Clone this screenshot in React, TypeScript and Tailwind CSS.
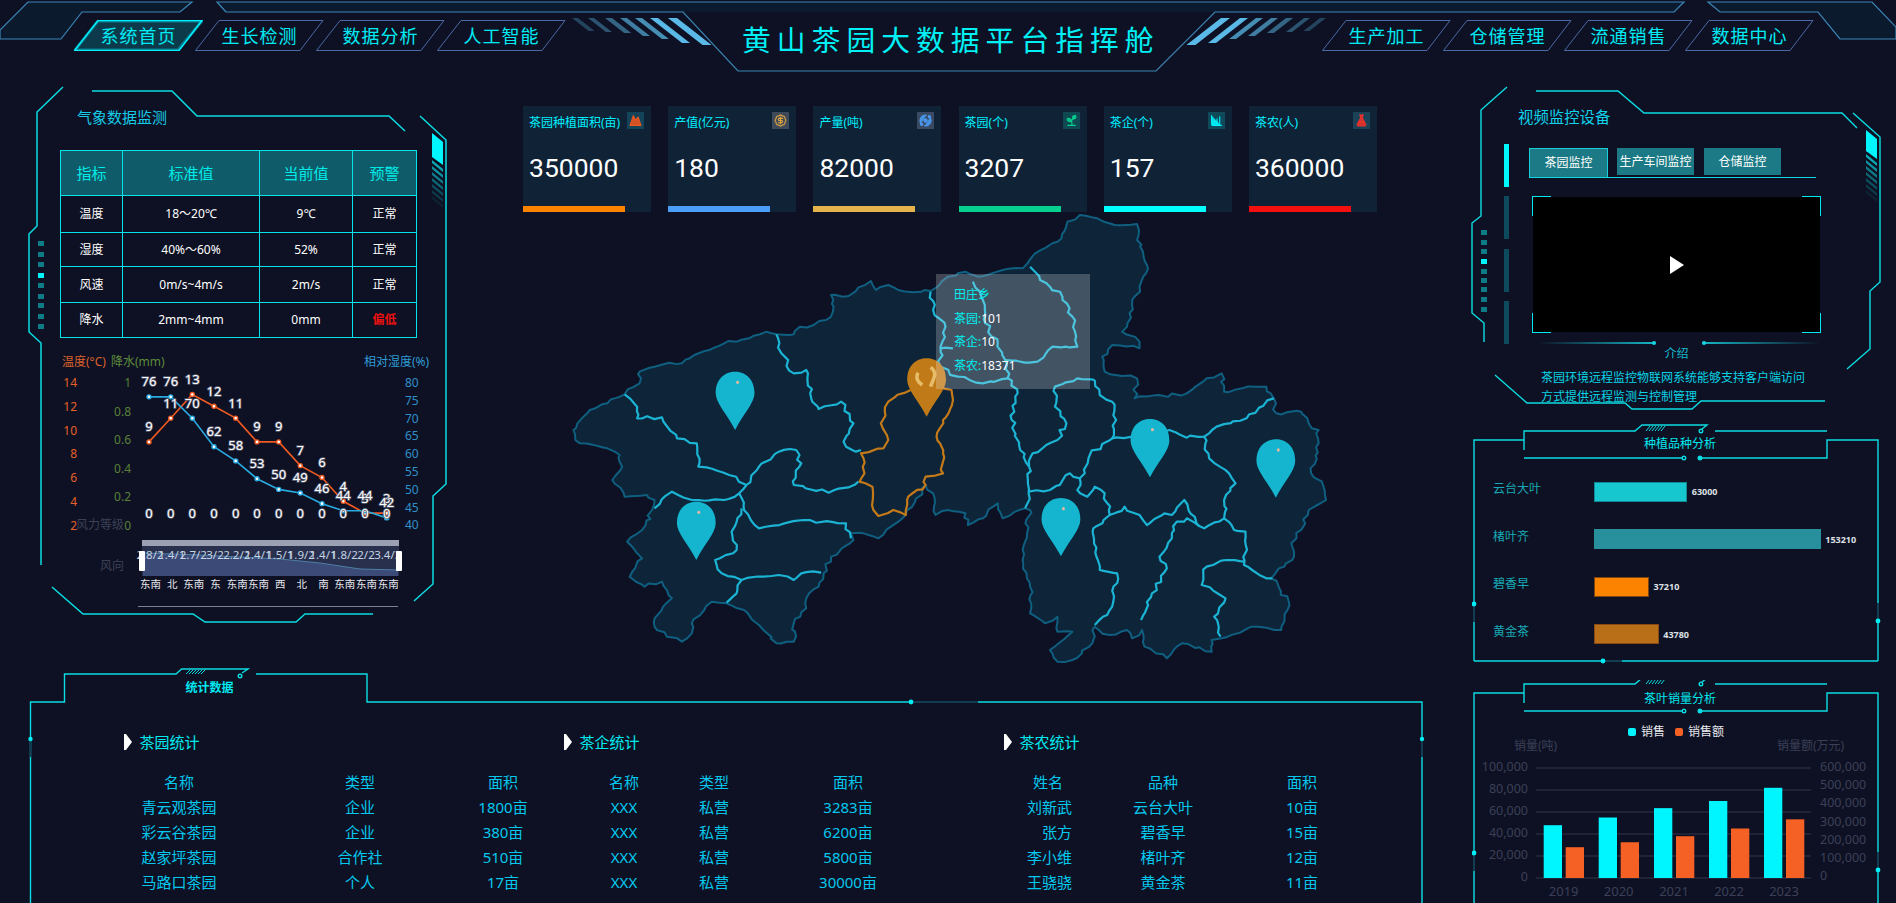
import React from "react";
import { Mountain, BadgeDollarSign, Orbit, Sprout, ChartColumnIncreasing, FlaskConical } from "lucide-react";

const CY = "#0bdde4";

function Tab({ label, active }: { label: string; active?: boolean }) {
  return (
    <div className="relative w-[129px] h-[31px] flex items-center justify-center -mr-[8px] shrink-0">
      <svg className="absolute inset-0" width="129" height="31" viewBox="0 0 129 31">
        {active && <polygon points="24,1 128,1 104,30 1,30" fill="#0d3a4a" stroke="#00f0ff" strokeWidth="3" strokeOpacity="0.35" />}
        <polygon points="24,0.5 128,0.5 105,30.5 0.5,30.5" fill="none" stroke={active ? "#00f0ff" : "#4a6aa5"} strokeWidth={active ? 1.5 : 1} />
      </svg>
      <span className="relative text-[18px] tracking-[1px] leading-none text-[#00ecf5]">{label}</span>
    </div>
  );
}

const stripes = [
  [668, 9, 27, 1], [650, 8, 25, 1], [635, 7, 21, 0.75], [620, 7, 18, 0.65], [605, 7, 15, 0.5], [588, 6, 14, 0.4], [572, 6, 13, 0.3],
];

function HeaderDecor() {
  const s = "#3a86b5";
  return (
    <svg className="absolute inset-0" width="1896" height="87" viewBox="0 0 1896 87">
      <polygon points="0,30 28,2 192,2 180,12 82,12 61,39 0,39" fill="#0c1a2e" stroke={s} strokeWidth="1.2" />
      <polygon points="217,2 1684,2 1674,12 226,12" fill="#0c1a30" />
      <polyline points="226,12 217,2 1684,2 1674,12 1215,12 1156,71 738,71 683,12 226,12" fill="none" stroke={s} strokeWidth="1.2" />
      <polygon points="1708,2 1872,2 1896,27 1896,39 1840,39 1818,12 1720,12" fill="#0c1a2e" stroke={s} strokeWidth="1.2" />
      {stripes.map(([x, w, h, o], i) => (
        <g key={i} fill="#5ab9e6" opacity={o}>
          <polygon points={`${x},18 ${x + w},18 ${x + w + h * 1.28},${18 + h} ${x + h * 1.28},${18 + h}`} />
          <polygon points={`${1898 - x},18 ${1898 - x - w},18 ${1898 - x - w - h * 1.28},${18 + h} ${1898 - x - h * 1.28},${18 + h}`} />
        </g>
      ))}
    </svg>
  );
}

function Header() {
  return (
    <header className="relative h-[87px] grid grid-cols-[742px_408px_1fr]">
      <HeaderDecor />
      <nav className="relative flex pl-[74px] pt-[20px] items-start">
        <Tab label="系统首页" active />
        <Tab label="生长检测" />
        <Tab label="数据分析" />
        <Tab label="人工智能" />
      </nav>
      <h1 className="relative pt-[22px] text-[28.8px] leading-[36px] tracking-[6px] font-normal text-[#00f0f5] whitespace-nowrap">黄山茶园大数据平台指挥舱</h1>
      <nav className="relative flex pl-[172px] pt-[20px] items-start">
        <Tab label="生产加工" />
        <Tab label="仓储管理" />
        <Tab label="流通销售" />
        <Tab label="数据中心" />
      </nav>
    </header>
  );
}

function Dots({ x, ys }: { x: number; ys: number[] }) {
  return (
    <g stroke="none">
      {ys.map((v, i) => (
        <rect key={i} x={x} y={v} width="6" height="5" fill={i === 3 ? "#00f6ff" : "#0e7c86"} />
      ))}
    </g>
  );
}

function Hatch({ x, y }: { x: number; y: number }) {
  return (
    <g stroke="none">
      {[0, 1, 2, 3, 4, 5, 6].map((i) => (
        <polygon key={i} fill="#0bdde4" opacity={0.75 - i * 0.11} points={`${x},${y + i * 6} ${x + 11},${y + 9 + i * 6} ${x + 11},${y + 12 + i * 6} ${x},${y + 3 + i * 6}`} />
      ))}
    </g>
  );
}

const tempV = [9, 11, 13, 12, 11, 9, 9, 7, 6, 4, 3, 3];
const humV = [76, 76, 70, 62, 58, 53, 50, 49, 46, 44, 44, 42];
const xs = [149, 170.7, 192.3, 214, 235.7, 257, 278.7, 300.3, 322, 343.3, 365, 386.7];
const dates = ["2.8/2", "1.4/1", "2.7/2", "3/2", "2.2/2", "1.4/1", "1.5/1", "1.9/2", "1.4/1", "1.8/2", "2/2", "3.4/3"];
const winds = ["东南", "北", "东南", "东", "东南", "东南", "西", "北", "南", "东南", "东南", "东南"];
const ty = (v: number) => 525 - (v - 2) * 11.87;
const hy = (v: number) => 525 - (v - 40) * 3.56;

function WeatherChart() {
  const label = (x: number, y: number, t: string | number, k: string) => (
    <text key={k} x={x} y={y} textAnchor="middle" fontSize="13" fill="#fff" stroke="#5a5e72" strokeWidth="1.6" paintOrder="stroke">{t}</text>
  );
  return (
    <svg className="ml-[11px] mt-[7px] overflow-visible" width="400" height="270" viewBox="40 345 400 270">
      <text x="62" y="366" fontSize="12" fill="#d9602c">温度(°C)</text>
      <text x="111" y="366" fontSize="12" fill="#5d8a3c">降水(mm)</text>
      <text x="364" y="366" fontSize="12" fill="#2f9bd6">相对湿度(%)</text>
      {[14, 12, 10, 8, 6, 4, 2].map((v, i) => (
        <text key={v} x="77" y={387 + i * 23.75} textAnchor="end" fontSize="12" fill="#e5602a">{v}</text>
      ))}
      {["1", "0.8", "0.6", "0.4", "0.2", "0"].map((v, i) => (
        <text key={v} x="131" y={387 + i * 28.5} textAnchor="end" fontSize="12" fill="#5a8038">{v}</text>
      ))}
      <text x="76" y="529" fontSize="12" fill="#3d4158">风力等级</text>
      {[80, 75, 70, 65, 60, 55, 50, 45, 40].map((v, i) => (
        <text key={v} x="405" y={387 + i * 17.8} fontSize="12" fill="#2f8fc8">{v}</text>
      ))}
      <polyline points={xs.map((x, i) => `${x},${ty(tempV[i])}`).join(" ")} fill="none" stroke="#f05a22" strokeWidth="1.6" />
      <polyline points={xs.map((x, i) => `${x},${hy(humV[i])}`).join(" ")} fill="none" stroke="#29abe2" strokeWidth="1.6" />
      {xs.map((x, i) => <circle key={"t" + i} cx={x} cy={ty(tempV[i])} r="2" fill="#fff" stroke="#f05a22" strokeWidth="1.4" />)}
      {xs.map((x, i) => <circle key={"h" + i} cx={x} cy={hy(humV[i])} r="2" fill="#fff" stroke="#29abe2" strokeWidth="1.4" />)}
      {xs.map((x, i) => label(x, 518, 0, "z" + i))}
      {xs.map((x, i) => label(x, ty(tempV[i]) - 10.5, tempV[i], "tl" + i))}
      {xs.map((x, i) => label(x, hy(humV[i]) - 10.5, humV[i], "hl" + i))}
      <rect x="142" y="540" width="257" height="36" fill="#29304e" />
      <rect x="142" y="540" width="257" height="6" fill="#9ba0b2" />
      <path d="M143,553 L200,555 L280,559 L320,563 L360,569 L398,570 L398,576 L143,576 Z" fill="#3c4a78" />
      <path d="M143,553 L200,555 L280,559 L320,563 L360,569 L398,570" fill="none" stroke="#4e7fa5" />
      {xs.map((x, i) => (
        <text key={"d" + i} x={x + 1} y="559" textAnchor="middle" fontSize="11.5" fill="#c3d4e2">{dates[i]}</text>
      ))}
      <rect x="139" y="551" width="6" height="20" rx="1" fill="#fff" />
      <rect x="396" y="551" width="6" height="20" rx="1" fill="#fff" />
      <text x="100" y="570" fontSize="12" fill="#3d4158">风向</text>
      {xs.map((x, i) => (
        <text key={"w" + i} x={x + 1.5} y="588" textAnchor="middle" fontSize="10.5" fill="#e8e8ee">{winds[i]}</text>
      ))}
      <line x1="138" y1="606.5" x2="398" y2="606.5" stroke="#7d8090" />
    </svg>
  );
}

const weather = [
  ["温度", "18～20℃", "9℃", "正常", "h-[37px]"],
  ["湿度", "40%～60%", "52%", "正常", "h-[34px]"],
  ["风速", "0m/s~4m/s", "2m/s", "正常", "h-[36px]"],
  ["降水", "2mm~4mm", "0mm", "偏低", "h-[35px]"],
];

function WeatherPanel() {
  const td = "border border-[#06e4ea] text-center text-[12px] text-white p-0";
  const th = "border border-[#06e4ea] text-center text-[15px] font-normal text-[#00ece8] p-0";
  return (
    <section className="relative w-[420px] h-[581px] shrink-0">
      <svg className="absolute inset-0 overflow-visible" width="420" height="540" viewBox="29 87 420 540" fill="none" stroke={CY} strokeWidth="1.5">
        <polyline points="63,87 37,112 37,226 29,234 29,332 41,343 41,565" />
        <polyline points="92,91 172,91 197,116 389,116 405,131" />
        <polyline points="420,116 446,140 446,484 433,496 433,584 414,601" />
        <polyline points="52,587 83,614 193,614 205,622 296,622 305,614 373,614" />
        <polygon points="432,133 443,142 443,165 432,157" fill="#00f6ff" stroke="none" />
        <Hatch x={432} y={160} />
        <Dots x={38} ys={[241, 252, 262, 273, 283, 294, 303, 314, 324]} />
      </svg>
      <div className="relative">
        <h2 className="pt-[20px] pl-[48px] text-[15px] leading-[20px] font-normal text-[#16cbe8]">气象数据监测</h2>
        <table className="ml-[31px] mt-[23px] w-[357px] border-collapse table-fixed">
          <colgroup>
            <col className="w-[62px]" />
            <col className="w-[137px]" />
            <col className="w-[93px]" />
            <col className="w-[64px]" />
          </colgroup>
          <thead>
            <tr className="h-[45px] bg-[#0f5b69]">
              <th className={th}>指标</th>
              <th className={th}>标准值</th>
              <th className={th}>当前值</th>
              <th className={th}>预警</th>
            </tr>
          </thead>
          <tbody>
            {weather.map((r) => (
              <tr key={r[0]} className={r[4]}>
                <td className={td}>{r[0]}</td>
                <td className={td}>{r[1]}</td>
                <td className={td}>{r[2]}</td>
                {r[3] === "偏低" ? (
                  <td className="border border-[#06e4ea] text-center text-[12px] font-bold text-[#f01010] p-0">{r[3]}</td>
                ) : (
                  <td className={td}>{r[3]}</td>
                )}
              </tr>
            ))}
          </tbody>
        </table>
        <WeatherChart />
      </div>
    </section>
  );
}

const kpis = [
  { t: "茶园种植面积(亩)", v: "350000", bar: "bg-[#fc8300]", ib: "bg-[#14445a]", ic: "#f0561e", f: "#f0561e", I: Mountain },
  { t: "产值(亿元)", v: "180", bar: "bg-[#4a9ef8]", ib: "bg-[#3e4a5a]", ic: "#e3a63c", f: "none", I: BadgeDollarSign },
  { t: "产量(吨)", v: "82000", bar: "bg-[#e3b44c]", ib: "bg-[#3a4a62]", ic: "#4a9ef8", f: "#4a9ef8", I: Orbit },
  { t: "茶园(个)", v: "3207", bar: "bg-[#05d08e]", ib: "bg-[#0f4a52]", ic: "#05d08e", f: "#05d08e", I: Sprout },
  { t: "茶企(个)", v: "157", bar: "bg-[#0ff]", ib: "bg-[#0f4a5a]", ic: "#00f6ff", f: "#00f6ff", I: ChartColumnIncreasing },
  { t: "茶农(人)", v: "360000", bar: "bg-[#f50f0f]", ib: "bg-[#1c4258]", ic: "#f0302a", f: "#f0302a", I: FlaskConical },
];

function rough(pts: number[][], amp: number, seed: number, closed = false) {
  const p = closed ? [...pts, pts[0]] : pts;
  let out = `M${p[0][0]},${p[0][1]}`;
  let c = seed;
  const n = () => {
    c += 1;
    const s = Math.sin(c * 12.9898 + seed * 78.233) * 43758.5453;
    return (s - Math.floor(s) - 0.5) * 2 * amp;
  };
  for (let i = 1; i < p.length; i++) {
    const [a, b] = p[i - 1];
    const [x, y] = p[i];
    const len = Math.hypot(x - a, y - b);
    const k = Math.max(1, Math.round(len / 14));
    for (let j = 1; j < k; j++) {
      out += ` L${(a + ((x - a) * j) / k + n()).toFixed(1)},${(b + ((y - b) * j) / k + n()).toFixed(1)}`;
    }
    out += ` L${x},${y}`;
  }
  return closed ? out + " Z" : out;
}

const outer = [[27,660],[35,640],[60,600],[95,580],[130,553],[160,520],[160,485],[190,470],[220,458],[245,460],[270,435],[300,420],[330,400],[355,395],[380,385],[415,365],[435,373],[470,373],[482,350],[510,345],[535,330],[550,290],[545,255],[580,258],[600,232],[625,213],[635,240],[660,225],[680,240],[710,247],[745,243],[780,200],[815,185],[840,200],[890,180],[930,175],[955,130],[1000,95],[1020,35],[1045,15],[1080,25],[1115,45],[1160,42],[1160,90],[1172,125],[1180,165],[1178,190],[1165,230],[1150,285],[1140,350],[1130,365],[1165,395],[1165,415],[1110,405],[1090,440],[1095,485],[1160,505],[1155,565],[1260,550],[1300,505],[1330,490],[1335,545],[1400,530],[1420,530],[1435,565],[1440,610],[1490,605],[1505,640],[1525,660],[1525,700],[1510,790],[1535,830],[1540,870],[1505,900],[1490,960],[1470,1000],[1472,1050],[1445,1075],[1430,1105],[1465,1175],[1450,1260],[1390,1250],[1330,1285],[1310,1290],[1310,1325],[1250,1300],[1220,1345],[1175,1310],[1170,1260],[1150,1285],[1140,1260],[1105,1275],[1075,1250],[1070,1300],[1030,1350],[1000,1355],[985,1320],[1030,1265],[1000,1265],[1000,1220],[975,1240],[945,1210],[945,1130],[930,1050],[930,1020],[945,900],[935,895],[890,925],[880,880],[850,925],[820,945],[815,910],[780,900],[755,915],[750,850],[735,825],[695,915],[640,985],[610,970],[585,970],[590,990],[545,1040],[530,1090],[520,1130],[495,1165],[495,1195],[470,1240],[470,1295],[435,1300],[400,1245],[370,1200],[335,1180],[305,1175],[290,1200],[265,1240],[265,1270],[245,1295],[215,1280],[190,1250],[190,1225],[225,1165],[205,1115],[170,1130],[140,1100],[165,1045],[135,995],[165,960],[185,900],[190,870],[175,855],[130,860],[105,810],[125,770],[120,735],[95,715],[40,700]];

const inner = [
  [[130,553],[155,590],[155,625],[205,622],[235,685],[275,700],[278,770],[340,795],[375,825]],
  [[435,373],[445,430],[470,490],[495,480],[505,565],[520,597],[565,575],[590,640],[570,695],[595,725],[605,720]],
  [[375,825],[400,770],[440,725],[475,720],[485,760],[470,825],[540,848],[600,815]],
  [[190,895],[225,845],[265,870],[330,870],[360,850],[375,825]],
  [[360,850],[370,900],[400,955],[490,930],[575,940],[585,985]],
  [[365,895],[345,965],[355,1020],[312,1050],[325,1090],[365,1110],[440,1095],[470,1110],[485,1090],[525,1088]],
  [[365,1110],[355,1150],[335,1178]],
  [[745,245],[750,300],[775,350],[765,410],[765,470],[800,500],[850,520],[900,505],[920,550],[908,630],[925,720],[943,770],[942,850],[935,895]],
  [[830,215],[850,270],[855,340],[880,400],[895,450],[900,505]],
  [[945,170],[965,210],[1010,260],[1030,320],[1040,410],[990,410],[960,455],[895,450]],
  [[765,415],[790,415]],
  [[1075,510],[1040,505],[995,530],[995,590],[1018,640],[1000,690],[950,730],[943,770]],
  [[1075,510],[1085,555],[1110,575],[1118,630],[1110,685],[1065,735],[1055,790],[1045,805],[1025,790],[985,840],[942,845]],
  [[1110,685],[1150,680],[1225,660],[1260,683],[1295,680],[1320,650],[1380,625],[1435,565]],
  [[1295,680],[1305,745],[1345,790],[1358,820],[1335,870],[1335,925],[1295,955],[1260,925],[1240,935],[1230,985],[1205,1040],[1220,1075],[1190,1150],[1168,1230]],
  [[1045,805],[1040,840],[1060,860],[1075,830],[1095,850],[1105,915],[1135,890],[1165,915],[1180,945],[1215,910],[1230,915],[1255,870],[1285,950]],
  [[1105,915],[1072,955],[1085,1080],[1120,1090],[1110,1190],[1075,1245]],
  [[1335,925],[1355,960],[1378,965],[1375,1065],[1420,1105],[1432,1105]],
  [[1375,1055],[1340,1050],[1300,1070],[1290,1125],[1338,1165],[1315,1220],[1328,1280]],
];

const orange = [[705,540],[660,575],[645,640],[660,690],[650,715],[605,730],[612,790],[602,815],[628,830],[630,900],[640,918],[670,900],[695,915],[700,860],[735,825],[735,800],[770,790],[770,730],[757,680],[770,630],[790,570],[787,540],[770,535]];

function pin(cx: number, t: number) {
  return `M${cx - 39},${t + 65} C${cx - 39},${t + 20} ${cx - 20},${t} ${cx},${t} C${cx + 20},${t} ${cx + 39},${t + 20} ${cx + 39},${t + 65} C${cx + 39},${t + 95} ${cx + 15},${t + 130} ${cx},${t + 175} C${cx - 15},${t + 130} ${cx - 39},${t + 95} ${cx - 39},${t + 65} Z`;
}

function MapView() {
  const pins = [[352, 485], [274, 875], [1007, 864], [1186, 627], [1439, 688]];
  return (
    <div className="relative w-[780px] h-[460px] ml-[111px] -mt-[2px]">
      <svg className="absolute inset-0" width="780" height="460" viewBox="0 0 1568 1380" preserveAspectRatio="none" fill="none">
        <path d={rough(outer, 5, 3, true)} fill="#0d2439" stroke="#0f5f80" strokeWidth="2" vectorEffect="non-scaling-stroke" strokeLinejoin="round" />
        {inner.map((l, i) => (
          <path key={i} d={rough(l, 5, i + 11)} stroke="#1bb4d4" strokeWidth="2.2" vectorEffect="non-scaling-stroke" strokeLinejoin="round" />
        ))}
        <path d={rough(orange, 5, 40)} stroke="#c47a18" strokeWidth="2.2" vectorEffect="non-scaling-stroke" strokeLinejoin="round" />
        {pins.map(([x, t], i) => (
          <g key={i}>
            <path d={pin(x, t)} fill="#15b5d0" />
            <ellipse cx={x + 5} cy={t + 32} rx="3" ry="5" fill="#e8b8a0" />
          </g>
        ))}
        <path d={pin(737, 445)} fill="#c07a18" />
        <path d="M720,488 C712,505 722,518 728,525 M745,472 C762,490 748,512 745,530" stroke="#e8bd6a" strokeWidth="3.5" vectorEffect="non-scaling-stroke" />
      </svg>
      <div className="absolute left-[376px] top-[64px] w-[154px] h-[115px] bg-[#ffffff38] pl-[18px] pt-[9px] text-[12px] leading-[23.7px] text-[#00f0f0]">
        <div>田庄乡</div>
        <div>茶园:<span className="text-white">101</span></div>
        <div>茶企:<span className="text-white">10</span></div>
        <div>茶农:<span className="text-white">18371</span></div>
      </div>
    </div>
  );
}

function Center() {
  return (
    <section className="w-[1023px] h-[581px] shrink-0">
      <div className="flex gap-[17.2px] pl-[74px] pt-[19px]">
        {kpis.map((k) => (
          <div key={k.t} className="relative w-[128px] h-[106px] bg-[#0f2236] shrink-0">
            <div className="flex justify-between pl-[6px] pr-[7px] pt-[6px] h-[24px]">
              <span className="text-[12px] leading-[20px] mt-[1px] text-[#00f0ff] whitespace-nowrap">{k.t}</span>
              <span className={`w-[17px] h-[17px] flex items-center justify-center shrink-0 ${k.ib}`}>
                <k.I size={13} color={k.ic} fill={k.f} fillOpacity={0.85} strokeWidth={2} />
              </span>
            </div>
            <div className="pl-[6px] pt-[20px] font-['Roboto','Noto_Sans',sans-serif] text-[26.5px] leading-[36px] text-white">{k.v}</div>
            <div className={`absolute left-0 bottom-0 w-[102px] h-[6px] ${k.bar}`} />
          </div>
        ))}
      </div>
      <MapView />
    </section>
  );
}

function Corner({ c }: { c: string }) {
  return <span className={`absolute w-[19px] h-[20px] border-[#00e8f0] ${c}`} />;
}

function VideoPanel() {
  return (
    <section className="relative h-[333px]">
      <svg className="absolute inset-0 overflow-visible" width="424" height="333" viewBox="1472 87 424 333" fill="none" stroke={CY} strokeWidth="1.4">
        <polyline points="1507,87 1481,110 1481,216 1472,223 1472,313 1484,323 1484,342" />
        <polyline points="1536,91 1618,91 1644,113 1842,113 1857,128" />
        <polyline points="1853,113 1880,137 1880,282 1870,291 1870,349 1847,369" />
        <polyline points="1495,375 1527,403 1625,403 1632,409 1692,409 1701,401 1825,401" />
        <polygon points="1866,130 1877,139 1877,159 1866,151" fill="#00f6ff" stroke="none" />
        <Hatch x={1866} y={154} />
        <Dots x={1481} ys={[230, 240, 249, 259, 269, 278, 287, 297, 307]} />
        <rect x="1504" y="144" width="5" height="43" fill="#00f6ff" stroke="none" />
        <rect x="1504" y="196" width="5" height="43" fill="#0d4a5e" stroke="none" />
        <rect x="1504" y="249" width="5" height="43" fill="#0d4a5e" stroke="none" />
        <rect x="1504" y="301" width="5" height="43" fill="#0d4a5e" stroke="none" />
      </svg>
      <div className="relative">
        <h2 className="pt-[21px] pl-[46px] text-[15.4px] leading-[20px] font-normal text-[#10d2ea]">视频监控设备</h2>
        <div className="ml-[57px] mt-[20px] w-[287px] h-[30px] flex items-start border-b border-[#0fd8e0] text-[12px] text-white">
          <div className="w-[79px] h-[29px] bg-[#1b7a85] border border-[#18cfd8] border-b-0 flex items-center justify-center">茶园监控</div>
          <div className="ml-[9px] w-[77px] h-[27px] bg-[#1b7a85] flex items-center justify-center">生产车间监控</div>
          <div className="ml-[10px] w-[77px] h-[27px] bg-[#1b7a85] flex items-center justify-center">仓储监控</div>
        </div>
        <div className="relative ml-[61px] mt-[19px] w-[287px] h-[135px] bg-black flex items-center justify-center">
          <Corner c="-left-px -top-px border-l border-t" />
          <Corner c="-right-px -top-px border-r border-t" />
          <Corner c="-left-px -bottom-px border-l border-b" />
          <Corner c="-right-px -bottom-px border-r border-b" />
          <svg width="14" height="18" viewBox="0 0 14 18"><polygon points="0,0 14,9 0,18" fill="#fff" /></svg>
        </div>
        <div className="ml-[65px] mt-[6px] w-[283px] h-[10px] flex justify-between items-center">
          <div className="relative w-[118px] h-[1.5px] bg-gradient-to-r from-transparent to-[#16b4c4]">
            <span className="absolute -right-[1px] -top-[1.5px] w-[4px] h-[4px] rounded-full bg-[#14d8e4]" />
          </div>
          <div className="relative w-[117px] h-[1.5px] bg-gradient-to-l from-transparent to-[#16b4c4]">
            <span className="absolute -left-[1px] -top-[1.5px] w-[4px] h-[4px] rounded-full bg-[#14d8e4]" />
          </div>
        </div>
        <div className="ml-[61px] w-[287px] text-center text-[12px] leading-[16px] -mt-[2px] text-[#16bcd0]">介绍</div>
        <p className="ml-[69px] mt-[7px] w-[270px] text-[12px] leading-[18.5px] text-[#08d4e6]">茶园环境远程监控物联网系统能够支持客户端访问<br />方式提供远程监测与控制管理</p>
      </div>
    </section>
  );
}

function Frame({ o, top, h, dots, bottom }: { o: number; top: number; h: number; dots: number[]; bottom: boolean }) {
  const [ld, rd] = dots;
  return (
    <svg className="absolute inset-0" width="424" height={h} viewBox={`1472 ${top} 424 ${h}`} fill="none" stroke={CY} strokeWidth="1.4">
      <polyline points={`1474,${bottom ? 661 : 930} 1474,${440 + o} 1524,${440 + o}`} />
      <polyline points={`1524,${450 + o} 1524,${431 + o} 1635,${431 + o} 1642,${425 + o} 1707,${425 + o} 1702,${429 + o}`} />
      <circle cx="1701" cy={431 + o} r="1.8" />
      {[0, 1, 2, 3, 4, 5].map((i) => (
        <line key={i} x1={1646 + i * 3} y1={431 + o} x2={1650 + i * 3} y2={426 + o} strokeWidth="1" />
      ))}
      <line x1="1715" y1={431 + o} x2="1827" y2={431 + o} />
      <polyline points={`1878,${bottom ? 661 : 930} 1878,${440 + o} 1827,${440 + o} 1827,${458 + o} 1701,${458 + o}`} />
      <line x1="1524" y1={458 + o} x2="1682" y2={458 + o} />
      <circle cx="1684" cy={458 + o} r="1.8" />
      <circle cx="1700" cy={458 + o} r="1.8" fill={CY} />
      {bottom && <line x1="1474" y1="661" x2="1878" y2="661" />}
      <line x1="1474" y1={ld} x2="1474" y2={ld + 18} stroke="#123d50" strokeWidth="2" />
      <circle cx="1474" cy={ld} r="2.4" fill="#00eef5" stroke="none" />
      <line x1="1878" y1={rd - 18} x2="1878" y2={rd} stroke="#123d50" strokeWidth="2" />
      <circle cx="1878" cy={rd} r="2.4" fill="#00eef5" stroke="none" />
      {bottom && <line x1="1603" y1="661" x2="1622" y2="661" stroke="#123d50" strokeWidth="2" />}
      {bottom && <circle cx="1603" cy="661" r="2.4" fill="#00eef5" stroke="none" />}
    </svg>
  );
}

const varieties = [
  { n: "云台大叶", v: 63000, c: "bg-[#17c7cf] border-[#0f8a96]" },
  { n: "楮叶齐", v: 153210, c: "bg-[#28909c] border-[#28909c]" },
  { n: "碧香早", v: 37210, c: "bg-[#fc8300] border-[#7a4510]" },
  { n: "黄金茶", v: 43780, c: "bg-[#b96e18] border-[#8a4a18]" },
];

function VarietyPanel() {
  return (
    <section className="relative h-[260px]">
      <Frame o={0} top={420} h={260} dots={[604, 621]} bottom />
      <div className="relative">
        <h3 className="pt-[15px] text-center pl-[8px] pr-[16px] text-[12px] leading-[18px] font-normal text-[#00e8f0]">种植品种分析</h3>
        <div className="mt-[15px] pl-[21px]">
          {varieties.map((r) => (
            <div key={r.n} className="flex items-center h-[47.5px]">
              <span className="w-[101px] mb-[5px] text-[12px] leading-[16px] text-[#17a9b5]">{r.n}</span>
              <span className={`h-[20px] border ${r.c}`} style={{ width: r.v * 0.00148 }} />
              <span className="ml-[4.5px] text-[9px] font-bold text-[#dde0e6]">{r.v}</span>
            </div>
          ))}
        </div>
      </div>
    </section>
  );
}

function SalesPanel() {
  const g = "#3b4058";
  const cy = [48000, 55000, 63500, 70000, 82000];
  const or = [168000, 195000, 228000, 270000, 320000];
  const bx = [1543.7, 1598.7, 1654, 1709, 1764];
  return (
    <section className="relative h-[223px]">
      <Frame o={253} top={680} h={223} dots={[853, 870]} bottom={false} />
      <div className="relative">
        <h3 className="pt-[10px] text-center pl-[8px] pr-[16px] text-[12px] leading-[18px] font-normal text-[#00e8f0]">茶叶销量分析</h3>
        <svg className="mt-[12px]" width="424" height="183" viewBox="1472 720 424 183">
          <rect x="1628" y="728" width="8" height="8" rx="2" fill="#00f6ff" />
          <text x="1641" y="735.5" fontSize="12" fill="#e8e8ee">销售</text>
          <rect x="1675" y="728" width="8" height="8" rx="2" fill="#f56024" />
          <text x="1688" y="735.5" fontSize="12" fill="#e8e8ee">销售额</text>
          <text x="1514" y="750" fontSize="12" fill={g}>销量(吨)</text>
          <text x="1777" y="750" fontSize="12" fill={g}>销量额(万元)</text>
          {[768, 790, 812, 834, 856, 878].map((y, i) => (
            <g key={y}>
              <line x1="1536" y1={y} x2="1811" y2={y} stroke="#33374a" />
              <text x="1528" y={y + 3} textAnchor="end" fontSize="12.5" fill={g}>{["100,000", "80,000", "60,000", "40,000", "20,000", "0"][i]}</text>
            </g>
          ))}
          {["600,000", "500,000", "400,000", "300,000", "200,000", "100,000", "0"].map((t, i) => (
            <text key={t} x="1820" y={771 + i * 18.2} fontSize="12.5" fill={g}>{t}</text>
          ))}
          {bx.map((x, i) => (
            <g key={x}>
              <rect x={x} y={878 - (cy[i] / 100000) * 110} width="18.3" height={(cy[i] / 100000) * 110} fill="#00f6ff" />
              <rect x={x + 22} y={878 - (or[i] / 600000) * 110} width="18.3" height={(or[i] / 600000) * 110} fill="#f56024" />
              <text x={x + 20} y="896" textAnchor="middle" fontSize="13" fill={g}>{2019 + i}</text>
            </g>
          ))}
        </svg>
      </div>
    </section>
  );
}

function SecHead({ t }: { t: string }) {
  return (
    <div className="flex items-center h-[20px] gap-[7.5px]">
      <svg width="8" height="16" viewBox="0 0 8 16"><polygon points="0,0 2,0 8,8 2,16 0,16" fill="#fff" /></svg>
      <span className="text-[15px] leading-[20px] text-[#00ecf0]">{t}</span>
    </div>
  );
}

function StatsPanel() {
  const cell = "text-center";
  const t1 = [["青云观茶园", "企业", "1800亩"], ["彩云谷茶园", "企业", "380亩"], ["赵家坪茶园", "合作社", "510亩"], ["马路口茶园", "个人", "17亩"]];
  const t2 = [["XXX", "私营", "3283亩"], ["XXX", "私营", "6200亩"], ["XXX", "私营", "5800亩"], ["XXX", "私营", "30000亩"]];
  const t3 = [["刘新武", "云台大叶", "10亩"], ["张方", "碧香早", "15亩"], ["李小维", "楮叶齐", "12亩"], ["王骁骁", "黄金茶", "11亩"]];
  return (
    <section className="relative h-[235px]">
      <svg className="absolute inset-0" width="1472" height="235" viewBox="0 668 1472 235" fill="none" stroke={CY} strokeWidth="1.4">
        <polyline points="30.5,903 30.5,702 64.5,702 64.5,674 176,674 181.6,669 248,669 242,673" />
        <circle cx="240" cy="676" r="1.8" />
        {[0, 1, 2, 3, 4, 5].map((i) => (
          <line key={i} x1={186 + i * 3} y1="674" x2={190 + i * 3} y2="670" strokeWidth="1" />
        ))}
        <polyline points="256,674 367,674 367,702 1422,702 1422,903" />
        <line x1="30.5" y1="739" x2="30.5" y2="757" stroke="#123d50" strokeWidth="2" />
        <line x1="1422" y1="739" x2="1422" y2="757" stroke="#123d50" strokeWidth="2" />
        <line x1="911" y1="702" x2="978" y2="702" stroke="#123d50" strokeWidth="2" />
        <circle cx="30.5" cy="739" r="2.2" fill="#00eef5" stroke="none" />
        <circle cx="1422" cy="739" r="2.2" fill="#00eef5" stroke="none" />
        <circle cx="911" cy="702" r="2.4" fill="#00eef5" stroke="none" />
      </svg>
      <div className="absolute left-[64px] top-[12px] w-[291px] text-center text-[12px] leading-[16px] font-bold text-[#00e8f0]">统计数据</div>
      <div className="relative flex pl-[108px] pt-[64px] text-[15px] leading-[25px] text-[#05c8ee]">
        <div className="w-[456px] shrink-0">
          <div className="pl-[16px]"><SecHead t="茶园统计" /></div>
          <div className="grid grid-cols-[142px_220px_66px] mt-[17.5px]">
            <div className={cell}>名称</div><div className={cell}>类型</div><div className={cell}>面积</div>
            {t1.flat().map((c, i) => <div key={i} className={cell}>{c}</div>)}
          </div>
        </div>
        <div className="w-[440px] shrink-0">
          <SecHead t="茶企统计" />
          <div className="grid grid-cols-[68px_112px_156px] mt-[17.5px] ml-[26px]">
            <div className={cell}>名称</div><div className={cell}>类型</div><div className={cell}>面积</div>
            {t2.flat().map((c, i) => <div key={i} className={cell}>{c}</div>)}
          </div>
        </div>
        <div className="w-[380px] shrink-0">
          <SecHead t="茶农统计" />
          <div className="grid grid-cols-[48px_182px_96px] mt-[17.5px] ml-[20px]">
            <div className={cell}>姓名</div><div className={cell}>品种</div><div className={cell}>面积</div>
            {t3.flat().map((c, i) => <div key={i} className={i % 3 === 0 ? "text-right whitespace-nowrap" : cell}>{c}</div>)}
          </div>
        </div>
      </div>
    </section>
  );
}

export default function App() {
  return (
    <div className="w-[1896px] h-[903px] overflow-hidden bg-[#0e1123] font-['Noto_Sans','Noto_Sans_CJK_SC',sans-serif]">
      <Header />
      <div className="flex h-[816px]">
        <div className="w-[1472px] shrink-0">
          <div className="flex h-[581px] pl-[29px]">
            <WeatherPanel />
            <Center />
          </div>
          <StatsPanel />
        </div>
        <div className="w-[424px] shrink-0">
          <VideoPanel />
          <VarietyPanel />
          <SalesPanel />
        </div>
      </div>
    </div>
  );
}
